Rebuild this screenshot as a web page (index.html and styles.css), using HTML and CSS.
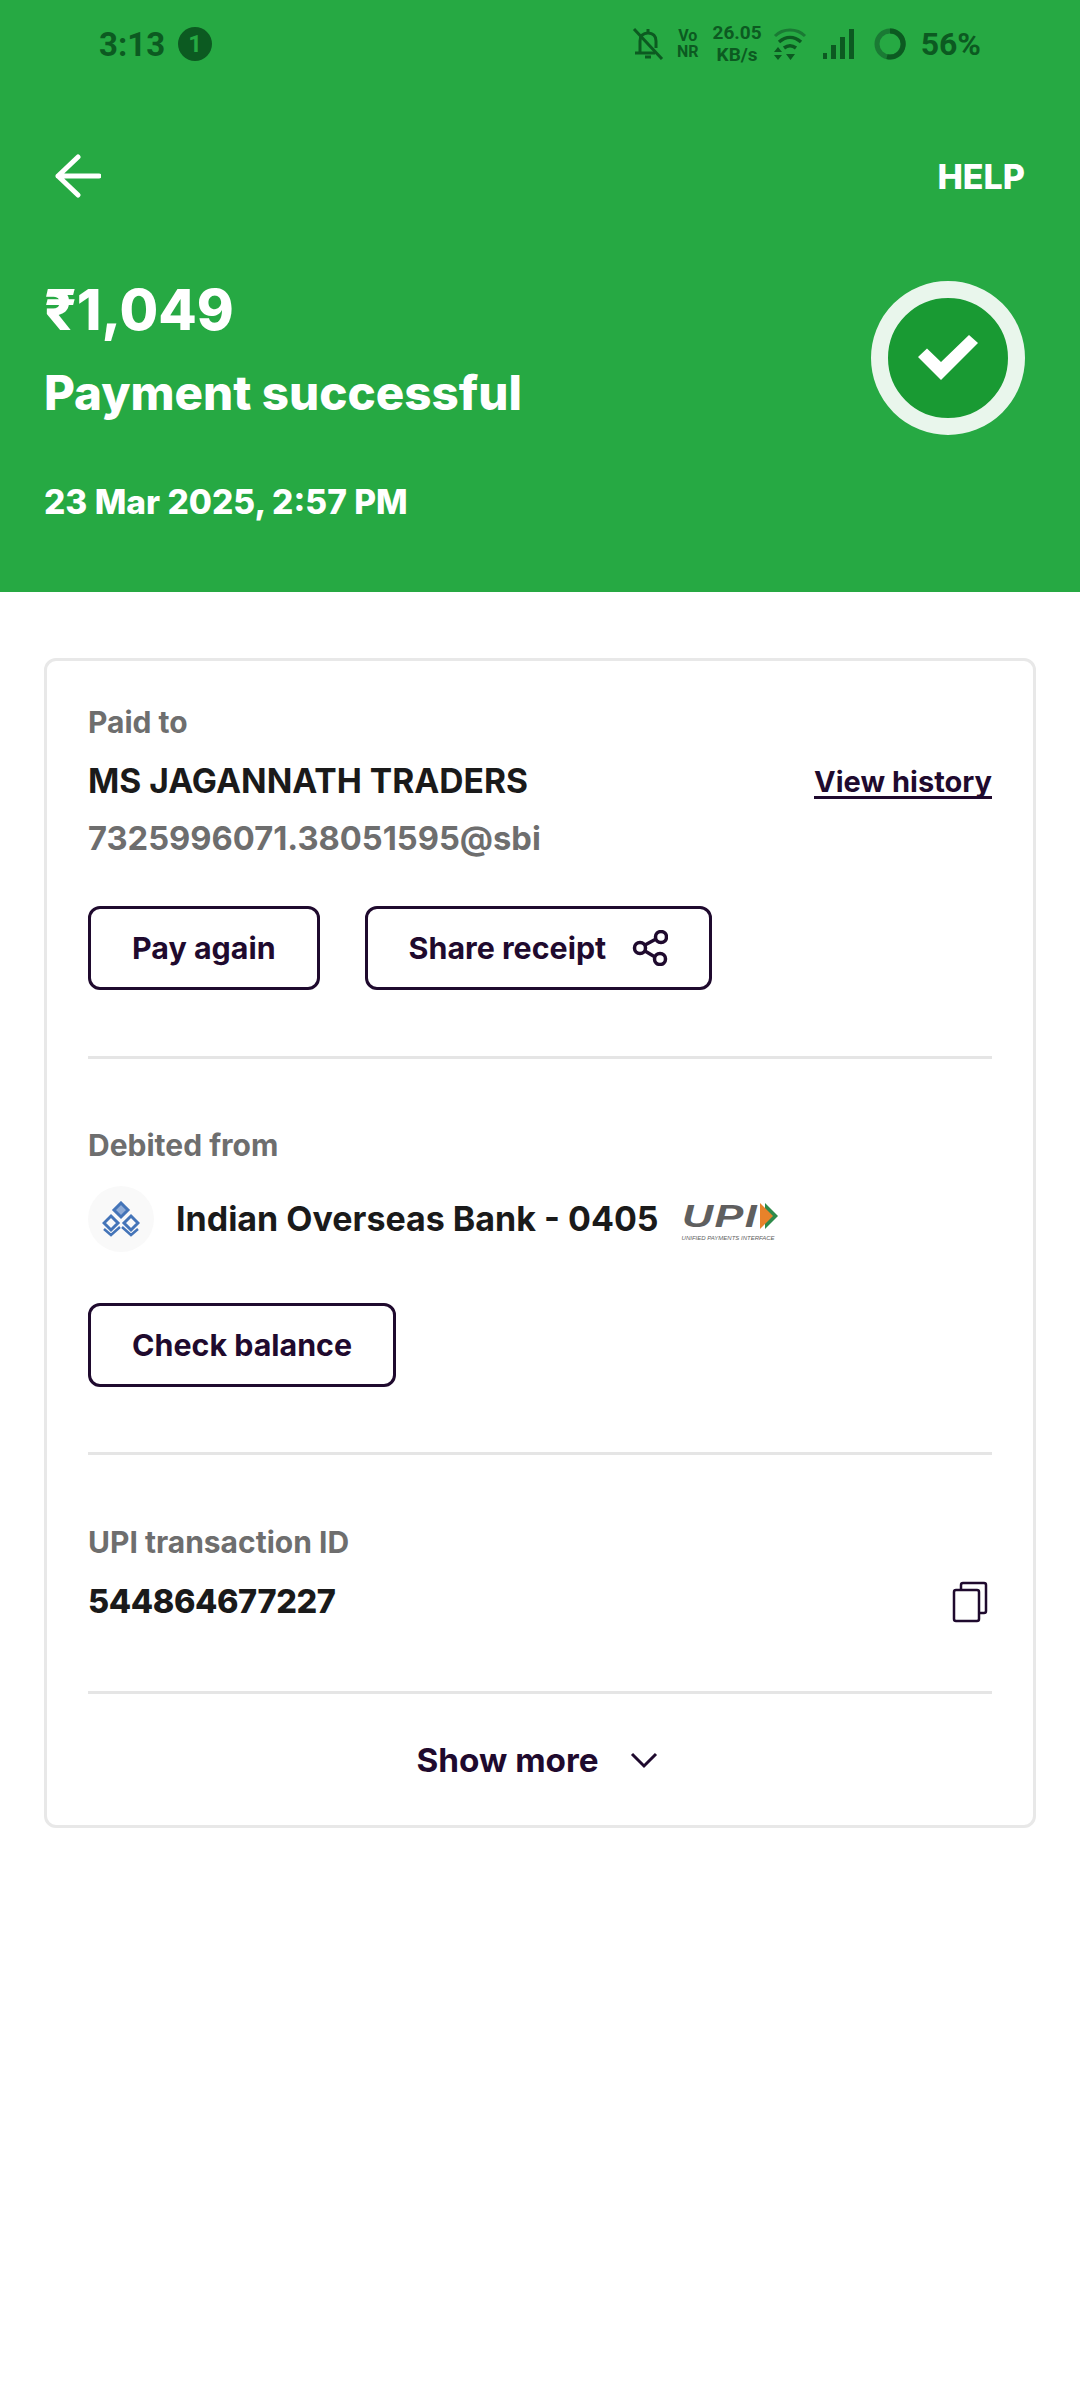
FILE: index.html
```html
<!DOCTYPE html>
<html lang="en">
<head>
    <meta charset="UTF-8">
    <meta name="viewport" content="width=device-width, initial-scale=1.0">
    <title>Payment successful</title>
    <link rel="stylesheet" href="styles.css">
</head>
<body>
    <header class="summary">
        <div class="status-bar">
            <div class="status-left">
                <span class="status-time">3:13</span>
                <span class="status-badge">1</span>
            </div>
            <div class="status-right">
                <svg class="icon-bell" width="32" height="34" viewBox="0 0 32 34" fill="none" stroke="#0c5a21" stroke-width="3">
                    <path d="M8 25V14c0-5 3-8 8-8s8 3 8 8v7M3 26h20" />
                    <path d="M16 2v4M13 30h6" />
                    <path d="M2 2l28 30" />
                </svg>
                <div class="status-stack vonr"><span>Vo</span><span>NR</span></div>
                <div class="status-stack speed"><span>26.05</span><span>KB/s</span></div>
                <svg class="icon-wifi" width="34" height="34" viewBox="0 0 34 34" fill="none">
                    <path d="M2 9C10 1 24 1 32 9" stroke="#1a7a34" stroke-width="3" />
                    <path d="M6 15c7-6 15-6 22 0" stroke="#0c5a21" stroke-width="3.500" />
                    <path d="M11 21c4-3 8-3 12 0" stroke="#0c5a21" stroke-width="3.500" />
                    <path d="M1 25l4-5 4 5zM1 28h8l-4 5zM13 27h9l-4.500 6z" fill="#0c5a21" />
                </svg>
                <svg class="icon-signal" width="32" height="32" viewBox="0 0 32 32" fill="#0c5a21">
                    <rect x="1" y="25" width="4" height="6" />
                    <rect x="9" y="17" width="5" height="14" />
                    <rect x="18" y="9" width="5" height="22" />
                    <rect x="27" y="1" width="5" height="30" />
                </svg>
                <svg class="icon-battery" width="32" height="32" viewBox="0 0 32 32" fill="none" stroke-width="5">
                    <circle cx="16" cy="16" r="13" stroke="#1a7a34" />
                    <path d="M16 3a13 13 0 1 1-3 25.600" stroke="#0c5a21" />
                </svg>
                <span class="status-battery">56%</span>
            </div>
        </div>

        <div class="top-bar">
            <svg width="46" height="44" viewBox="0 0 46 44" fill="none" stroke="#fff" stroke-width="5" stroke-linecap="round" stroke-linejoin="round">
                <path d="M23 3L3 22l20 19M3 22h41" />
            </svg>
            <a class="help" href="#help">HELP</a>
        </div>

        <div class="payment">
            <div class="payment-text">
                <div class="amount">₹1,049</div>
                <h1 class="title">Payment successful</h1>
                <div class="date">23 Mar 2025, 2:57 PM</div>
            </div>
            <div class="check-ring">
                <svg width="60" height="46" viewBox="0 0 60 46" fill="#fff">
                    <path d="M0 22L9 13.500 23 27 51 0 60 8 23 45z" />
                </svg>
            </div>
        </div>
    </header>

    <main class="card">
        <section class="card-section paid-section">
            <div class="label">Paid to</div>
            <div class="name-row">
                <div class="value payee">MS JAGANNATH TRADERS</div>
                <a class="history" href="#history">View history</a>
            </div>
            <div class="upi-id">7325996071.38051595@sbi</div>
            <div class="actions">
                <a class="btn btn-pay" href="#pay">Pay again</a>
                <a class="btn btn-share" href="#share">
                    Share receipt
                    <svg width="36" height="36" viewBox="0 0 36 36" fill="none" stroke="#1f0a2e" stroke-width="3.500">
                        <circle cx="8" cy="18" r="5.500" />
                        <circle cx="29" cy="7" r="5.500" />
                        <circle cx="28" cy="29" r="5.500" />
                        <path d="M13 15l11-6M13 21l10 6" />
                    </svg>
                </a>
            </div>
        </section>

        <section class="card-section debit-section">
            <div class="label">Debited from</div>
            <div class="bank-row">
                <div class="bank-logo">
                    <svg width="38" height="36" viewBox="0 0 38 36" fill="none" stroke="#4474b8" stroke-width="3">
                        <path d="M19 2l7 7-7 7-7-7z" fill="#8fabd6" />
                        <path d="M9 15l7 7-7 7-7-7zM29 15l7 7-7 7-7-7z" />
                        <path d="M2 28l7 6 9-8M36 28l-7 6-9-8" stroke-width="2.500" />
                    </svg>
                </div>
                <div class="value bank-name">Indian Overseas Bank - 0405</div>
                <div class="upi-logo">
                    <div class="upi-mark">
                        <span class="upi-letters">UPI</span>
                        <svg class="upi-flag" width="18" height="26" viewBox="0 0 18 26">
                            <path d="M5 0l13 13L5 26z" fill="#2f8a4a" />
                            <path d="M0 0l13 13L0 26z" fill="#e8822a" />
                        </svg>
                    </div>
                    <span class="upi-tag">UNIFIED PAYMENTS INTERFACE</span>
                </div>
            </div>
            <div class="actions">
                <a class="btn btn-balance" href="#balance">Check balance</a>
            </div>
        </section>

        <section class="card-section txn-section">
            <div class="label">UPI transaction ID</div>
            <div class="name-row">
                <div class="value txn-id">544864677227</div>
                <svg class="copy-icon" width="36" height="42" viewBox="0 0 36 42" fill="none" stroke="#1f0a2e" stroke-width="2.500">
                    <rect x="2" y="9" width="25" height="31" rx="2" />
                    <path d="M9 9V4a2 2 0 0 1 2-2h21a2 2 0 0 1 2 2v26a2 2 0 0 1-2 2h-5" />
                </svg>
            </div>
        </section>

        <a class="show-more" href="#more">
            Show more
            <svg width="28" height="18" viewBox="0 0 28 18" fill="none" stroke="#1f0a2e" stroke-width="3">
                <path d="M2 3l12 12L26 3" />
            </svg>
        </a>
    </main>
</body>
</html>
```

FILE: styles.css
```css
* {
    box-sizing: border-box;
    margin: 0;
    padding: 0;
}

body {
    background-color: #fff;
    font-family: Inter, "Noto Sans", sans-serif;
    color: #1a1a1a;
}

a {
    text-decoration: none;
    color: #1f0a2e;
}

.summary {
    height: 592px;
    background-color: #26a943;
    color: #fff;
}

.status-bar {
    height: 88px;
    padding: 0 99px;
    display: flex;
    justify-content: space-between;
    align-items: center;
    font-family: Roboto, sans-serif;
    font-weight: 700;
    color: #0c5a21;
}

.status-left {
    display: flex;
    align-items: center;
    gap: 13px;
}

.status-time {
    font-size: 33px;
}

.status-badge {
    width: 34px;
    height: 34px;
    border-radius: 50%;
    background-color: #0c5a21;
    color: #26a943;
    font-size: 24px;
    line-height: 34px;
    text-align: center;
}

.status-right {
    display: flex;
    align-items: center;
}

.status-stack {
    display: flex;
    flex-direction: column;
    align-items: center;
    font-weight: 700;
}

.vonr {
    margin-left: 13px;
    font-size: 16px;
    line-height: 16px;
}

.speed {
    margin-left: 14px;
    font-size: 19px;
    line-height: 22px;
}

.icon-wifi {
    margin-left: 11px;
}

.icon-signal {
    margin-left: 15px;
}

.icon-battery {
    margin-left: 20px;
}

.status-battery {
    margin-left: 15px;
    font-size: 32px;
}

.top-bar {
    height: 64px;
    margin-top: 56px;
    padding: 0 55px;
    display: flex;
    justify-content: space-between;
    align-items: center;
}

.help {
    color: #fff;
    font-size: 34px;
    font-weight: 800;
}

.payment {
    padding: 0 55px 0 44px;
    display: flex;
    justify-content: space-between;
    align-items: flex-start;
}

.amount {
    margin-top: 70px;
    font-size: 56px;
    line-height: 64px;
    font-weight: 800;
}

.title {
    margin-top: 23px;
    font-size: 47.500px;
    line-height: 56px;
    font-weight: 800;
}

.date {
    margin-top: 61px;
    font-size: 33.500px;
    line-height: 40px;
    font-weight: 800;
}

.check-ring {
    width: 154px;
    height: 154px;
    margin-top: 73px;
    border: 17px solid #e9f6ec;
    border-radius: 50%;
    background-color: #199a33;
    display: flex;
    align-items: center;
    justify-content: center;
}

.card {
    margin: 66px 44px 0;
    border: 3px solid #e8e8e8;
    border-radius: 12px;
}

.card-section {
    margin: 0 41px;
    border-bottom: 3px solid #e5e5e5;
}

.paid-section {
    padding: 43px 0 66px;
}

.debit-section {
    padding: 68px 0 65px;
}

.txn-section {
    padding: 69px 0 68px;
}

.label {
    font-size: 30px;
    line-height: 36px;
    font-weight: 700;
    color: #6e6e6e;
}

.name-row {
    margin-top: 21px;
    display: flex;
    justify-content: space-between;
    align-items: center;
}

.value {
    font-size: 34px;
    line-height: 40px;
    font-weight: 700;
    color: #1a1a1a;
}

.payee {
    font-size: 33.600px;
}

.txn-id {
    font-size: 32.500px;
    font-weight: 800;
    letter-spacing: -0.4px;
}

.history {
    margin-top: 4px;
    font-size: 29px;
    font-weight: 700;
    border-bottom: 3px solid #1f0a2e;
    line-height: 28px;
}

.upi-id {
    margin-top: 17px;
    font-size: 32.700px;
    line-height: 40px;
    font-weight: 700;
    color: #6e6e6e;
}

.actions {
    margin-top: 48px;
    display: flex;
    gap: 45px;
}

.btn {
    height: 84px;
    padding: 0 41px;
    border: 3px solid #1f0a2e;
    border-radius: 12px;
    display: flex;
    align-items: center;
    gap: 26px;
    font-size: 30.400px;
    font-weight: 700;
    color: #1f0a2e;
}

.bank-row {
    margin-top: 23px;
    display: flex;
    align-items: center;
}

.bank-logo {
    width: 66px;
    height: 66px;
    border-radius: 50%;
    background-color: #f9f9f9;
    display: flex;
    align-items: center;
    justify-content: center;
}

.bank-name {
    margin-left: 22px;
}

.upi-logo {
    margin-left: 23px;
    display: flex;
    flex-direction: column;
    color: #5f5f5f;
}

.upi-mark {
    display: flex;
    align-items: center;
}

.upi-letters {
    width: 74px;
    font-family: "Liberation Sans", sans-serif;
    font-size: 32px;
    font-weight: 700;
    font-style: italic;
    letter-spacing: 1px;
    transform: scaleX(1.350);
    transform-origin: left;
}

.upi-flag {
    margin-left: 4px;
}

.upi-tag {
    font-family: "Liberation Sans", sans-serif;
    font-size: 6px;
    font-style: italic;
    white-space: nowrap;
}

.debit-section .actions {
    margin-top: 51px;
}

.copy-icon {
    margin-right: 4px;
}

.show-more {
    height: 131px;
    padding-right: 6px;
    display: flex;
    align-items: center;
    justify-content: center;
    gap: 31px;
    font-size: 33.300px;
    font-weight: 700;
}
```
